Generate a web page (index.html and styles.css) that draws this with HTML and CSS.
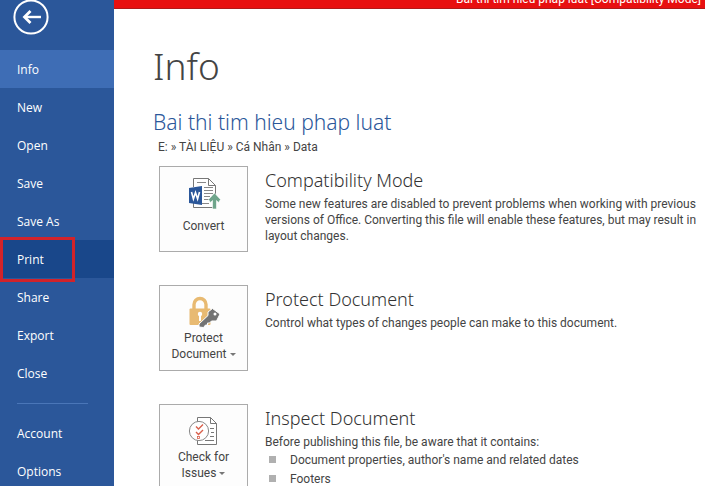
FILE: index.html
```html
<!DOCTYPE html>
<html lang="en">
<head>
<meta charset="utf-8">
<title>Info</title>
<link rel="stylesheet" href="styles.css">
</head>
<body>
<div class="app">
  <nav class="sidebar">
    <button class="back" aria-label="Back">
      <svg width="36" height="36" viewBox="0 0 36 36" fill="none" stroke="#fff">
        <circle cx="18" cy="17" r="16.6" stroke-width="2"/>
        <path d="M28 17H12" stroke-width="2.4"/>
        <path d="M17.500 11L11.500 17L17.500 23" stroke-width="2.800"/>
      </svg>
    </button>
    <a class="item current" href="#">Info</a>
    <a class="item" href="#">New</a>
    <a class="item" href="#">Open</a>
    <a class="item" href="#">Save</a>
    <a class="item" href="#">Save As</a>
    <a class="item hover" href="#">Print</a>
    <a class="item" href="#">Share</a>
    <a class="item" href="#">Export</a>
    <a class="item" href="#">Close</a>
    <hr class="divider">
    <a class="item" href="#">Account</a>
    <a class="item" href="#">Options</a>
  </nav>
  <div class="page">
    <header class="titlebar"><span>Bai thi tim hieu phap luat [Compatibility Mode]</span></header>
    <main class="content">
      <h1>Info</h1>
      <h2 class="doc-name">Bai thi tim hieu phap luat</h2>
      <p class="path">E: » TÀI LIỆU » Cá Nhân » Data</p>

      <section class="row">
        <button class="tile">
          <svg width="34" height="34" viewBox="0 0 34 34">
            <path d="M6.500 10V1.500H21.500L28.500 8.500V30.500H6.500V26" fill="#fff" stroke="#777"/>
            <path d="M21.500 1.500V8.500H28.500" fill="none" stroke="#777"/>
            <path d="M10 5.500H19M17 10.500H26M17 13.500H26M17 16.500H26M17 19.500H23M17 22.500H22M10 26.500H22" stroke="#888"/>
            <path d="M2 11L15 9V28L2 26Z" fill="#2b579a"/>
            <path d="M4.500 15L6.400 22L8.500 15.500L10.600 22L12.500 15" fill="none" stroke="#fff" stroke-width="1.600"/>
            <path d="M27.500 16L33.500 22.500L31.500 25.500L29.500 23.500V32H25.500V23.500L23.500 25.500L21.500 22.500Z" fill="#6fa58b" stroke="#fff" stroke-width=".6"/>
          </svg>
          <span>Convert</span>
        </button>
        <div class="text">
          <h3>Compatibility Mode</h3>
          <p>Some new features are disabled to prevent problems when working with previous versions of Office. Converting this file will enable these features, but may result in layout changes.</p>
        </div>
      </section>

      <section class="row">
        <button class="tile">
          <svg width="34" height="34" viewBox="0 0 34 34">
            <path d="M7 15V8.500a6 6 0 0 1 12 0V15" fill="none" stroke="#e8ba72" stroke-width="3.400"/>
            <rect x="2.500" y="12.500" width="21" height="16.500" rx="1" fill="#e8ba72"/>
            <circle cx="13" cy="18" r="2.200" fill="#fff"/>
            <path d="M13 19V25" stroke="#fff" stroke-width="2"/>
            <path d="M25.500 12.500L33 18L29.500 25L24.500 25L22.500 27H20.500V29H18.500L16.500 31.500L12 31V28L21 19.500V16Z" fill="#737373" stroke="#fff"/>
            <circle cx="28" cy="18" r="1.500" fill="#fff"/>
          </svg>
          <span>Protect<br>Document<i class="arrow"></i></span>
        </button>
        <div class="text">
          <h3>Protect Document</h3>
          <p>Control what types of changes people can make to this document.</p>
        </div>
      </section>

      <section class="row">
        <button class="tile">
          <svg width="34" height="34" viewBox="0 0 34 34">
            <path d="M10.500 7V2.500H23.500L29.500 8.500V29.500H10.500V24" fill="#fff" stroke="#777"/>
            <path d="M23.500 2.500V8.500H29.500M23 13.500H27M24 17.500H27M23 21.500H27M18 25.500H27" fill="none" stroke="#777"/>
            <circle cx="12" cy="16" r="9.600" fill="#fff" stroke="#888"/>
            <path d="M9 11.500L11.500 14L16 9.500M9 17L11.500 19.500L16 15" fill="none" stroke="#d9604c" stroke-width="1.400"/>
            <rect x="10.500" y="21.500" width="2" height="2" fill="none" stroke="#d9604c" stroke-width=".8"/>
          </svg>
          <span>Check for<br>Issues<i class="arrow"></i></span>
        </button>
        <div class="text">
          <h3>Inspect Document</h3>
          <p>Before publishing this file, be aware that it contains:</p>
          <ul>
            <li>Document properties, author's name and related dates</li>
            <li>Footers</li>
          </ul>
        </div>
      </section>
    </main>
  </div>
</div>
</body>
</html>
```
FILE: styles.css
```css
* {
  box-sizing: border-box;
}

body {
  margin: 0;
  font: 12px/16px Roboto, "Noto Sans", sans-serif;
  color: #444;
  background: #fff;
}

.app {
  display: flex;
  height: 100vh;
  overflow: hidden;
}

.sidebar {
  flex: none;
  width: 114px;
  font-family: "Open Sans", "Noto Sans", sans-serif;
  background: #2b579a;
}

.back {
  display: block;
  height: 50px;
  padding: 0 0 0 13px;
  border: 0;
  background: none;
}

.back svg {
  display: block;
  margin-bottom: 14px;
}

.item {
  position: relative;
  display: flex;
  align-items: center;
  height: 38px;
  padding: 2px 17px 0;
  color: #fff;
  text-decoration: none;
}

.current {
  background: #3e6db5;
}

.hover {
  background: #19478a;
}

.hover::after {
  content: "";
  position: absolute;
  inset: -3px 39px -4px 0;
  border: 3px solid #d2232a;
}

.divider {
  margin: 11px 26px 10px 17px;
  border: 0;
  border-top: 1px solid #4a76b8;
}

.page {
  flex: 1;
  min-width: 0;
}

.titlebar {
  display: flex;
  justify-content: flex-end;
  align-items: flex-end;
  height: 9px;
  padding: 0 4px 1px;
  overflow: hidden;
  border-bottom: 1px solid #b01a1a;
  color: #fff;
  background: #e81010;
  white-space: nowrap;
}

.content {
  padding: 31px 8px 0 39px;
}

h1,
h2,
h3,
p,
ul {
  margin: 0;
  font-weight: 400;
}

h1,
h2,
h3 {
  font-family: "Noto Sans", sans-serif;
  font-weight: 300;
}

h1 {
  font-size: 37px;
  line-height: 52px;
}

.doc-name {
  margin-top: 16px;
  font-size: 21px;
  line-height: 28px;
  color: #2b579a;
}

.path {
  margin: 3px 0 11px 5px;
}

.row {
  display: flex;
  gap: 17px;
  margin: 0 0 33px 6px;
}

.tile {
  display: flex;
  flex: none;
  flex-direction: column;
  align-items: center;
  width: 89px;
  height: 86px;
  padding: 10px 0;
  border: 1px solid #ababab;
  font: inherit;
  color: #444;
  background: #fdfdfd;
}

.tile svg {
  flex: none;
  overflow: visible;
}

.tile span {
  margin: auto 0;
}

.arrow {
  display: inline-block;
  margin: 0 0 2px 3px;
  border: 3px solid transparent;
  border-top-color: #777;
  border-bottom: 0;
}

h3 {
  margin-bottom: 2px;
  font-size: 18px;
  line-height: 28px;
  color: #333;
}

ul {
  padding: 0;
  list-style: none;
}

li {
  display: flex;
  align-items: center;
  gap: 14px;
  height: 19px;
  padding-left: 4px;
}

li::before {
  content: "";
  width: 7px;
  height: 7px;
  background: #b0b0b0;
}
```
